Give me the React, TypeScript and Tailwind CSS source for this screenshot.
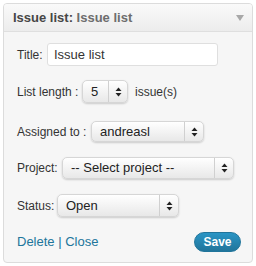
import React from "react";

const font = { fontFamily: '"Liberation Sans", Arial, sans-serif' };

function UpDown() {
  return (
    <svg width="7" height="10" viewBox="0 0 7 10">
      <path d="M3.5 0.5 L6.5 4 L0.5 4 Z" fill="#222" />
      <path d="M0.5 6 L6.5 6 L3.5 9.5 Z" fill="#222" />
    </svg>
  );
}

function FakeSelect({ value, className }: { value: string; className: string }) {
  return (
    <div
      className={`flex items-stretch rounded-[5px] border border-[#d6d6d6] bg-gradient-to-b from-white to-[#e8e8e8] shadow-[0_1px_2px_rgba(0,0,0,0.18)] ${className}`}
    >
      <div className="flex flex-1 items-center pl-[8px] text-[13px] text-[#222]">{value}</div>
      <div className="flex w-[19px] items-center justify-center border-l border-[#d0d0d0]">
        <UpDown />
      </div>
    </div>
  );
}

export default function App() {
  return (
    <div className="h-[266px] w-[256px] bg-white p-[3px]" style={font}>
      <div className="w-[250px] overflow-hidden rounded-[4px] border border-[#dcdcdc] bg-[#f6f6f6]">
        <div className="flex h-[28px] items-center justify-between border-b border-[#dfdfdf] bg-gradient-to-b from-[#fafafa] to-[#ececec] pl-[9px] pr-[8px]">
          <div className="text-[13px] font-bold text-[#464646]">
            Issue list:<span className="text-[#6d6d6d]"> Issue list</span>
          </div>
          <svg width="8" height="6" viewBox="0 0 8 6">
            <path d="M0 0 L8 0 L4 6 Z" fill="#a8a8a8" />
          </svg>
        </div>

        <div className="px-[13px] pb-[10px] pt-[11px] text-[12px] text-[#333]">
          <div className="flex h-[23px] items-center">
            <span className="w-[30px]">Title:</span>
            <div className="flex h-[23px] w-[171px] items-center rounded-[3px] border border-[#dfdfdf] bg-white px-[6px] text-[13px] text-[#333]">
              Issue list
            </div>
          </div>

          <div className="mt-[14px] flex h-[23px] items-center">
            <span className="w-[65px]">List length :</span>
            <FakeSelect value="5" className="h-[23px] w-[46px]" />
            <span className="ml-[7px]">issue(s)</span>
          </div>

          <div className="mt-[18px] flex h-[21px] items-center">
            <span className="w-[74px] whitespace-nowrap">Assigned to :</span>
            <FakeSelect value="andreasl" className="h-[21px] w-[113px]" />
          </div>

          <div className="mt-[15px] flex h-[22px] items-center">
            <span className="w-[45px]">Project:</span>
            <FakeSelect value="-- Select project --" className="h-[22px] w-[172px]" />
          </div>

          <div className="mt-[15px] flex h-[23px] items-center">
            <span className="w-[40px]">Status:</span>
            <FakeSelect value="Open" className="h-[23px] w-[122px]" />
          </div>

          <div className="mt-[15px] flex h-[20px] items-center justify-between text-[13px]">
            <div className="text-[#21759b]">
              Delete <span>|</span> Close
            </div>
            <div className="mr-[-2px] flex h-[20px] w-[47px] items-center justify-center rounded-full border border-[#21759b] bg-gradient-to-b from-[#2a95c5] to-[#21759b] text-[12px] font-bold text-white">
              Save
            </div>
          </div>
        </div>
      </div>
    </div>
  );
}
